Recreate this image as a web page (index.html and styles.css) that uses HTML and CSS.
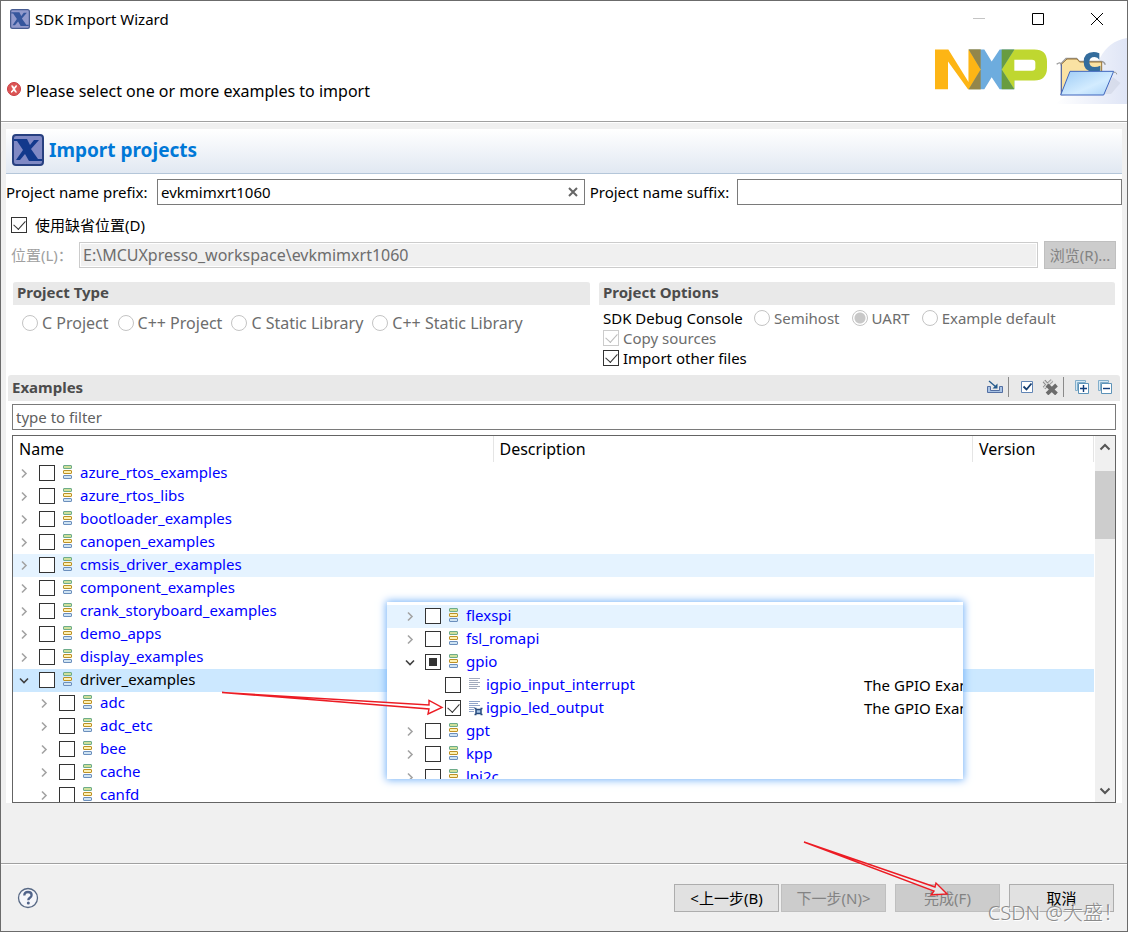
FILE: index.html
```html
<!DOCTYPE html>
<html lang="zh-CN">
<head>
<meta charset="utf-8">
<title>SDK Import Wizard</title>
<link rel="stylesheet" href="styles.css">
</head>
<body>
<svg class="defs" aria-hidden="true">
  <defs>
    <linearGradient id="folder-front" x1="0" y1="0" x2="1" y2="1"><stop offset="0" stop-color="#9ccbf5"/><stop offset=".6" stop-color="#d3ecff"/><stop offset="1" stop-color="#a9d2f8"/></linearGradient>
    <linearGradient id="banner-glow" x1="0" y1="0" x2="1" y2="0"><stop offset="0" stop-color="#fff"/><stop offset="1" stop-color="#dfe5f6"/></linearGradient>
    <symbol id="x-app" viewBox="0 0 32 32">
      <rect x="1" y="1" width="30" height="30" rx="3" fill="#8089c4" stroke="#274080" stroke-width="2"/>
      <path d="M2 5h13l3 6 4-5h5L19 15l7 10h4v2H17l-4-7-5 6H4l7-10-6-9H2z" fill="#12398c"/>
    </symbol>
    <symbol id="closed" viewBox="0 0 16 16"><path d="M6 4.500 10 8.500 6 12.500" fill="none" stroke="#a3a3a3" stroke-width="1.600"/></symbol>
    <symbol id="open" viewBox="0 0 16 16"><path d="M4 6.500 8 10.500 12 6.500" fill="none" stroke="#404040" stroke-width="1.600"/></symbol>
    <symbol id="group" viewBox="0 0 25 16">
      <rect x="8.500" y=".5" width="8" height="3" rx=".5" fill="#cfe09a" stroke="#6dac8b"/>
      <rect x="8.500" y="5.500" width="8" height="3" rx=".5" fill="#fdf1b4" stroke="#bd9125"/>
      <rect x="8.500" y="10.500" width="8" height="3" rx=".5" fill="#cfe3f2" stroke="#6b8fbd"/>
    </symbol>
    <symbol id="lines" viewBox="0 0 25 16"><path d="M8 1.500h11M8 3.500h9M8 5.500h11M8 7.500h9M8 9.500h11M8 11.500h8" stroke="#a2abbd" stroke-width="1"/></symbol>
    <symbol id="lines-chip" viewBox="0 0 25 16"><path d="M8 1.500h11M8 3.500h9M8 5.500h11M8 7.500h6M8 9.500h5M8 11.500h5" stroke="#8fa3c8"/><path d="M15 9.500h5v4h-5z" fill="#a9c6e6" stroke="#274a7d" stroke-width="1.500"/><path d="M13.500 8.500h2M19.500 8.500h2M13.500 14.500h2M19.500 14.500h2" stroke="#274a7d" stroke-width="1.500"/></symbol>
  </defs>
</svg>
<main class="window">
  <header class="titlebar">
    <svg class="app-icon" viewBox="0 0 32 32"><use href="#x-app"/></svg>
    <h1 class="window-title">SDK Import Wizard</h1>
    <button class="caption" aria-label="Minimize"><svg viewBox="0 0 14 14"><path d="M1 6.500h12" stroke="#c4c4c4"/></svg></button>
    <button class="caption" aria-label="Maximize"><svg viewBox="0 0 14 14"><path d="M1.500 1.500h11v11h-11z" fill="none" stroke="#000"/></svg></button>
    <button class="caption" aria-label="Close"><svg viewBox="0 0 14 14"><path d="M1 1l12 12M13 1 1 13" stroke="#000"/></svg></button>
  </header>

  <div class="banner">
    <p class="message">
      <svg class="error-icon" viewBox="0 0 14 14"><circle cx="7" cy="7" r="6.500" fill="#dc5655" stroke="#c83b42"/><path d="M4.500 4c2 0 3 6 5 6M9.800 4C8 4 6 10 4 10" fill="none" stroke="#fff" stroke-width="1.800"/></svg>
      Please select one or more examples to import
    </p>
    <svg class="nxp" viewBox="18 35 336 122" role="img" aria-label="NXP">
      <path d="M18 36h40l61 98V36h36v119h-38L57 72v83H18z" fill="#fdb515"/>
      <path d="M119 36h47l22 36 24-36h44v119h-44l-24-36-22 36h-47l36-59z" fill="#6dacde"/>
      <path d="M119 36l36 60-36 59z" fill="#fdb515"/>
      <path d="M119 36h36v60zM155 96v59h-36z" fill="#93864b"/>
      <path d="M218 96l38-60h60q38 0 38 37v17q0 39-38 39h-60v26z" fill="#bfd730"/>
      <path d="M218 36h38l-38 60zM218 96l38 59h-38z" fill="#689c40"/>
      <path d="M256 67h53q10 0 10 9v14q0 10-10 10h-53z" fill="#fff"/>
    </svg>
    <svg class="folder" viewBox="375 0 216 198" aria-hidden="true">
      <path d="M375 198Q480 130 510 60 535 10 591 0v198z" fill="url(#banner-glow)"/>
      <path d="M515 168l34-50 22 17-28 33z" fill="#c9cfe0" opacity=".5"/>
      <path d="M380 79q12-10 14 3v-6l14-15h32l8 9h66q8 0 12 10" fill="none" stroke="#9a9a9a" stroke-width="4"/>
      <path d="M394 170V79l17-16h30l8 9h66v95z" fill="#fae2a3" stroke="#977336" stroke-width="3"/>
      <path d="M394 79v90" stroke="#4a67b5" stroke-width="3"/>
      <path d="M508 46v19q-5-8-14-8-16 0-16 15t16 15q9 0 17-4v15q-9 3-21 3-29 0-29-29 0-30 30-30 7 0 17 4z" fill="#346d9d"/>
      <path d="M420 100h131l-30 71H392z" fill="url(#folder-front)" stroke="#3e65bd" stroke-width="3"/>
      <path d="M551 103h5q4 1 4 6" fill="none" stroke="#999" stroke-width="3"/>
    </svg>
  </div>

  <div class="body">
    <div class="panel">
      <div class="panel-heading">
        <svg class="panel-icon" viewBox="0 0 32 32"><use href="#x-app"/></svg>
        <h2 class="panel-title">Import projects</h2>
      </div>

      <div class="names">
        <label class="prefix-label" for="prefix">Project name prefix:</label>
        <div class="field prefix-field">
          <input id="prefix" class="text" type="text" value="evkmimxrt1060">
          <button class="clear" aria-label="Clear"><svg viewBox="0 0 12 12"><path d="M2 2l8 8M10 2l-8 8" stroke="#666" stroke-width="2"/></svg></button>
        </div>
        <label class="suffix-label" for="suffix">Project name suffix:</label>
        <input id="suffix" class="text boxed suffix" type="text">
      </div>

      <label class="option default-location"><input class="box" type="checkbox" checked><span>使用缺省位置(D)</span></label>

      <div class="location">
        <label class="location-label" for="location">位置(L)：</label>
        <input id="location" class="text boxed path" type="text" value="E:\MCUXpresso_workspace\evkmimxrt1060" disabled>
        <button class="button browse" disabled>浏览(R)...</button>
      </div>

      <div class="sections">
        <section>
          <h3 class="section-title">Project Type</h3>
          <div class="types">
            <label class="option muted"><input class="dot" type="radio" name="type" disabled><span>C Project</span></label>
            <label class="option muted"><input class="dot" type="radio" name="type" disabled><span>C++ Project</span></label>
            <label class="option muted"><input class="dot" type="radio" name="type" disabled><span>C Static Library</span></label>
            <label class="option muted"><input class="dot" type="radio" name="type" disabled><span>C++ Static Library</span></label>
          </div>
        </section>
        <section>
          <h3 class="section-title">Project Options</h3>
          <div class="options">
            <div class="console">
              <span class="console-label">SDK Debug Console</span>
              <label class="option muted"><input class="dot" type="radio" name="console" disabled><span>Semihost</span></label>
              <label class="option muted"><input class="dot" type="radio" name="console" checked disabled><span>UART</span></label>
              <label class="option muted"><input class="dot" type="radio" name="console" disabled><span>Example default</span></label>
            </div>
            <label class="option muted"><input class="box" type="checkbox" checked disabled><span>Copy sources</span></label>
            <label class="option"><input class="box" type="checkbox" checked><span>Import other files</span></label>
          </div>
        </section>
      </div>

      <div class="examples-bar">
        <h3 class="examples-title">Examples</h3>
        <button class="tool" aria-label="Import"><svg viewBox="0 0 16 16"><path d="M.5 7.500h3v4h9v-4h3v6H.5z" fill="#a9c3e4" stroke="#536fa3"/><path d="M2 2l7 6" stroke="#245a8c" stroke-width="1.300"/><path d="M10.500 4.500v5h-5z" fill="#245a8c"/></svg></button>
        <button class="tool ruled" aria-label="Select all"><svg viewBox="0 0 16 16"><path d="M2.500 2.500h11v11h-11z" fill="#fff" stroke="#6185b5"/><path d="M4.500 7.500l3 3 5-6" fill="none" stroke="#173f70" stroke-width="1.800"/></svg></button>
        <button class="tool" aria-label="Deselect all"><svg viewBox="0 0 16 16"><path d="M2 2l7 8M10 1.500 2 9" stroke="#8b8b8b" stroke-width="3.600"/><path d="M2 2l7 8M10 1.500 2 9" stroke="#dedede" stroke-width="1.800"/><path d="M5 6l9.500 9M14.500 6 5 15" stroke="#6c6c6c" stroke-width="3.800"/></svg></button>
        <button class="tool ruled" aria-label="Expand all"><svg viewBox="0 0 16 16"><path d="M1.500 11.500v-10h10v2h-8v8z" fill="#d5e8f3" stroke="#82aecb"/><path d="M4.500 4.500h10v10h-10z" fill="#fff" stroke="#5c93b8"/><path d="M6 9.500h7M9.500 6v7" stroke="#123f7c" stroke-width="1.400"/></svg></button>
        <button class="tool" aria-label="Collapse all"><svg viewBox="0 0 16 16"><path d="M1.500 11.500v-10h10v2h-8v8z" fill="#d5e8f3" stroke="#82aecb"/><path d="M4.500 4.500h10v10h-10z" fill="#fff" stroke="#5c93b8"/><path d="M6 9.500h7" stroke="#123f7c" stroke-width="1.400"/></svg></button>
      </div>

      <input class="text boxed filter" type="text" placeholder="type to filter" aria-label="Filter examples">

      <div class="tree">
        <div class="tree-view">
          <table class="grid">
            <colgroup><col class="col-name"><col class="col-description"><col class="col-version"></colgroup>
            <thead><tr><th>Name</th><th>Description</th><th>Version</th></tr></thead>
            <tbody>
              <tr><td><div class="node"><svg class="twist"><use href="#closed"/></svg><label><input class="box" type="checkbox"><svg class="kind"><use href="#group"/></svg><span>azure_rtos_examples</span></label></div></td><td></td><td></td></tr>
              <tr><td><div class="node"><svg class="twist"><use href="#closed"/></svg><label><input class="box" type="checkbox"><svg class="kind"><use href="#group"/></svg><span>azure_rtos_libs</span></label></div></td><td></td><td></td></tr>
              <tr><td><div class="node"><svg class="twist"><use href="#closed"/></svg><label><input class="box" type="checkbox"><svg class="kind"><use href="#group"/></svg><span>bootloader_examples</span></label></div></td><td></td><td></td></tr>
              <tr><td><div class="node"><svg class="twist"><use href="#closed"/></svg><label><input class="box" type="checkbox"><svg class="kind"><use href="#group"/></svg><span>canopen_examples</span></label></div></td><td></td><td></td></tr>
              <tr class="hover"><td><div class="node"><svg class="twist"><use href="#closed"/></svg><label><input class="box" type="checkbox"><svg class="kind"><use href="#group"/></svg><span>cmsis_driver_examples</span></label></div></td><td></td><td></td></tr>
              <tr><td><div class="node"><svg class="twist"><use href="#closed"/></svg><label><input class="box" type="checkbox"><svg class="kind"><use href="#group"/></svg><span>component_examples</span></label></div></td><td></td><td></td></tr>
              <tr><td><div class="node"><svg class="twist"><use href="#closed"/></svg><label><input class="box" type="checkbox"><svg class="kind"><use href="#group"/></svg><span>crank_storyboard_examples</span></label></div></td><td></td><td></td></tr>
              <tr><td><div class="node"><svg class="twist"><use href="#closed"/></svg><label><input class="box" type="checkbox"><svg class="kind"><use href="#group"/></svg><span>demo_apps</span></label></div></td><td></td><td></td></tr>
              <tr><td><div class="node"><svg class="twist"><use href="#closed"/></svg><label><input class="box" type="checkbox"><svg class="kind"><use href="#group"/></svg><span>display_examples</span></label></div></td><td></td><td></td></tr>
              <tr class="selected"><td><div class="node"><svg class="twist"><use href="#open"/></svg><label><input class="box" type="checkbox"><svg class="kind"><use href="#group"/></svg><span>driver_examples</span></label></div></td><td></td><td></td></tr>
              <tr><td><div class="node child"><svg class="twist"><use href="#closed"/></svg><label><input class="box" type="checkbox"><svg class="kind"><use href="#group"/></svg><span>adc</span></label></div></td><td></td><td></td></tr>
              <tr><td><div class="node child"><svg class="twist"><use href="#closed"/></svg><label><input class="box" type="checkbox"><svg class="kind"><use href="#group"/></svg><span>adc_etc</span></label></div></td><td></td><td></td></tr>
              <tr><td><div class="node child"><svg class="twist"><use href="#closed"/></svg><label><input class="box" type="checkbox"><svg class="kind"><use href="#group"/></svg><span>bee</span></label></div></td><td></td><td></td></tr>
              <tr><td><div class="node child"><svg class="twist"><use href="#closed"/></svg><label><input class="box" type="checkbox"><svg class="kind"><use href="#group"/></svg><span>cache</span></label></div></td><td></td><td></td></tr>
              <tr><td><div class="node child"><svg class="twist"><use href="#closed"/></svg><label><input class="box" type="checkbox"><svg class="kind"><use href="#group"/></svg><span>canfd</span></label></div></td><td></td><td></td></tr>
            </tbody>
          </table>
        </div>
        <div class="scrollbar">
          <button class="scroll-button" aria-label="Scroll up"><svg viewBox="0 0 12 8"><path d="M1.500 6.500 6 2l4.500 4.500" fill="none" stroke="#555" stroke-width="2"/></svg></button>
          <div class="track"><div class="thumb"></div></div>
          <button class="scroll-button" aria-label="Scroll down"><svg viewBox="0 0 12 8"><path d="M1.500 1.500 6 6l4.500-4.500" fill="none" stroke="#555" stroke-width="2"/></svg></button>
        </div>

        <div class="inset">
          <table class="grid">
            <colgroup><col class="inset-name"><col></colgroup>
            <tbody>
              <tr class="hover"><td><div class="node"><svg class="twist"><use href="#closed"/></svg><label><input class="box" type="checkbox"><svg class="kind"><use href="#group"/></svg><span>flexspi</span></label></div></td><td></td></tr>
              <tr><td><div class="node"><svg class="twist"><use href="#closed"/></svg><label><input class="box" type="checkbox"><svg class="kind"><use href="#group"/></svg><span>fsl_romapi</span></label></div></td><td></td></tr>
              <tr><td><div class="node"><svg class="twist"><use href="#open"/></svg><label><input class="box partial" type="checkbox"><svg class="kind"><use href="#group"/></svg><span>gpio</span></label></div></td><td></td></tr>
              <tr><td><div class="node child"><svg class="twist"></svg><label><input class="box" type="checkbox"><svg class="kind"><use href="#lines"/></svg><span>igpio_input_interrupt</span></label></div></td><td>The GPIO Example</td></tr>
              <tr><td><div class="node child"><svg class="twist"></svg><label><input class="box" type="checkbox" checked><svg class="kind"><use href="#lines-chip"/></svg><span>igpio_led_output</span></label></div></td><td>The GPIO Example</td></tr>
              <tr><td><div class="node"><svg class="twist"><use href="#closed"/></svg><label><input class="box" type="checkbox"><svg class="kind"><use href="#group"/></svg><span>gpt</span></label></div></td><td></td></tr>
              <tr><td><div class="node"><svg class="twist"><use href="#closed"/></svg><label><input class="box" type="checkbox"><svg class="kind"><use href="#group"/></svg><span>kpp</span></label></div></td><td></td></tr>
              <tr><td><div class="node"><svg class="twist"><use href="#closed"/></svg><label><input class="box" type="checkbox"><svg class="kind"><use href="#group"/></svg><span>lpi2c</span></label></div></td><td></td></tr>
            </tbody>
          </table>
        </div>
        <svg class="arrow arrow-example" viewBox="220 688 226 30" aria-hidden="true"><path d="M222 692.500l207 12.500v-4.500l13 7-14 6.500 1-5z" fill="#fff" fill-opacity=".8" stroke="#ec1c24" stroke-width="1.400"/></svg>
      </div>
    </div>
  </div>

  <footer class="footer">
    <button class="help" aria-label="Help"><svg viewBox="0 0 22 22"><circle cx="11" cy="11" r="9.500" fill="#f5f6fa" stroke="#586985" stroke-width="1.300"/><path d="M7.300 8.600q0-3.600 3.700-3.600 3.600 0 3.600 3 0 1.600-1.700 2.800-1.600 1.100-1.600 2.400" fill="none" stroke="#51648a" stroke-width="2.300"/><circle cx="11.300" cy="16" r="1.500" fill="#51648a"/></svg></button>
    <div class="pair">
      <button class="button">&lt;上一步(B)</button>
      <button class="button" disabled>下一步(N)&gt;</button>
    </div>
    <div class="finish">
      <button class="button" disabled>完成(F)</button>
      <svg class="arrow arrow-finish" viewBox="802 838 148 60" aria-hidden="true"><path d="M804 842l131 45 1-4 11 11-16 1 3-4z" fill="#f0f0f0" fill-opacity=".7" stroke="#ec1c24" stroke-width="1.400"/></svg>
    </div>
    <button class="button">取消</button>
    <span class="watermark">CSDN @大盛！</span>
  </footer>
</main>
</body>
</html>
```
FILE: styles.css
```css
* { box-sizing: border-box; }

body {
  margin: 0;
  background: #fff;
  color: #000;
  font: 15px/20px "Noto Sans", "Noto Sans CJK SC", sans-serif;
}

h1, h2, h3, p { margin: 0; font-size: 15px; }
button, input { font: inherit; color: inherit; margin: 0; }
button { padding: 0; border: 0; background: none; }
svg { display: block; flex: none; }
.defs { position: absolute; width: 0; height: 0; }

.window {
  display: flex;
  flex-direction: column;
  height: 100vh;
  border: 1px solid #6b6b6b;
  background: #f0f0f0;
  overflow: hidden;
}

/* Title bar and banner */
.titlebar { display: flex; align-items: center; height: 37px; padding: 0 1px 2px 9px; background: #fff; }
.app-icon { width: 20px; height: 20px; margin-right: 5px; opacity: .85; }
.window-title { flex: 1; font-weight: 400; }
.caption { display: grid; place-items: center; width: 59px; height: 35px; }
.caption svg { width: 14px; height: 14px; }

.banner { display: flex; align-items: flex-start; height: 84px; background: #fff; border-bottom: 1px solid #a0a0a0; flex: none; }
.message { display: flex; align-items: center; gap: 5px; flex: 1; padding: 43px 0 0 6px; }
.error-icon { width: 14px; height: 14px; margin-bottom: 4px; }
.nxp { width: 112px; height: 41px; margin: 11px 8px 0 0; }
.folder { width: 72px; height: 66px; }

.body { display: flex; flex: 1; min-height: 0; padding: 6px 5px 60px; border-top: 1px solid #fff; }
.panel { display: flex; flex-direction: column; flex: 1; min-width: 0; background: #fff; }

.panel-heading {
  display: flex;
  align-items: center;
  gap: 5px;
  height: 45px;
  padding: 0 0 3px 6px;
  background: linear-gradient(#fff, #e1e8f2);
  border-bottom: 1px solid #b4c6d9;
  flex: none;
}
.panel-icon { width: 32px; height: 32px; }
.panel-title { font-size: 19px; color: #0078d7; }

/* Form rows */
.names { display: flex; align-items: center; gap: 5px; margin-top: 5px; }
.prefix-label { width: 146px; white-space: nowrap; }
.suffix-label { width: 142px; white-space: nowrap; }
.text { height: 26px; padding: 0 3px; border: 0; border-radius: 0; background: #fff; outline: 0; min-width: 0; }
.boxed, .field { border: 1px solid #7a7a7a; }
.field { display: flex; align-items: center; height: 26px; background: #fff; }
.field .text { flex: 1; height: 24px; }
.prefix-field { flex: 431 1 0; }
.suffix { flex: 382 1 0; }
.clear { display: grid; place-items: center; width: 22px; height: 24px; }
.clear svg { width: 12px; height: 12px; }

.option { display: flex; align-items: center; gap: 4px; }
.muted { color: #6d6d6d; }
.default-location { gap: 8px; margin: 10px 0 0 5px; }

.box, .dot {
  appearance: none;
  width: 16px;
  height: 16px;
  flex: none;
  border: 1px solid #333;
  background: #fff;
}
.box { position: relative; }
.box:checked::after {
  content: "";
  position: absolute;
  left: 4px;
  top: 0;
  width: 6px;
  height: 10px;
  border: solid #333;
  border-width: 0 1px 1px 0;
  transform: rotate(42deg);
}
.box.partial { background: linear-gradient(#333, #333) center / 8px 8px no-repeat #fff; }
.box:disabled { border-color: #ccc; }
.box:disabled::after { border-color: #bbb; }
.dot { border-color: #c4c4c4; border-radius: 50%; }
.dot:checked { background: radial-gradient(circle, #c8c8c8 5px, #fff 6px); }

.location { display: flex; align-items: center; margin: 6px 6px 0 5px; }
.location-label { width: 68px; color: #a0a0a0; }
.path { flex: 1; margin-right: 6px; background: #f0f0f0; border-color: #ccc; box-shadow: inset 0 0 0 1px #fff; color: #6d6d6d; }
.button { width: 105px; height: 28px; border: 1px solid #adadad; background: #e1e1e1; white-space: nowrap; }
.button:disabled { border-color: #bfbfbf; background: #ccc; color: #838383; }
.browse { width: 72px; }

.message, .path, .types, .grid th { font-size: 16px; }

.sections { display: grid; grid-template-columns: 577fr 516fr; gap: 9px; margin: 12px 7px 0; }
.section-title, .examples-title { color: #4c4c4c; }
.section-title { height: 24px; padding: 0 4px; border-top: 1px solid #fff; background: #e9e9e9; border-radius: 3px 3px 0 0; }
.types { display: flex; gap: 9px; padding: 8px 0 0 9px; white-space: nowrap; }
.options { padding: 3px 0 0 4px; }
.console { display: flex; gap: 5px; white-space: nowrap; }
.console-label { width: 146px; }
.console .option + .option { margin-left: 7px; }

/* Examples */
.examples-bar { display: flex; align-items: center; height: 26px; margin: 7px 2px 0; padding: 0 3px 2px 4px; background: #e9e9e9; border-radius: 3px 3px 0 0; flex: none; }
.examples-title { flex: 1; padding-bottom: 1px; }
.tool { display: grid; place-items: center; width: 24px; height: 20px; }
.tool svg { width: 16px; height: 16px; }
.ruled { width: 30px; padding-left: 6px; border-left: 1px solid #8a8a8a; margin-left: 1px; }
.filter { margin: 3px 6px 0; }
.filter::placeholder { color: #5f5f5f; opacity: 1; }

.tree { position: relative; display: flex; flex: 1; min-height: 0; margin: 5px 6px 0; border: 1px solid #646464; }
.tree-view { flex: 1; min-width: 0; padding-right: 1px; overflow: hidden; }
.grid { width: 100%; border-collapse: collapse; table-layout: fixed; }
.col-name { width: 480px; }
.col-version { width: 121px; }
.grid th { height: 26px; padding: 0 6px; border-right: 1px solid #e5e5e5; font-weight: 400; text-align: left; }
.grid td { height: 23px; padding: 0 0 1px; white-space: nowrap; }
.hover { background: #e5f3ff; }
.selected { background: #cce8ff; }
.node { display: flex; align-items: center; gap: 7px; padding-left: 3px; color: #00f; }
.child { padding-left: 23px; }
.selected .node { color: #000; }
.node label { display: flex; align-items: center; }
.node span { padding-bottom: 2px; }
.twist { width: 16px; height: 16px; }
.kind { width: 25px; height: 16px; }

.scrollbar { display: flex; flex-direction: column; width: 20px; background: #f0f0f0; }
.scroll-button { display: grid; place-items: center; height: 22px; }
.scroll-button svg { width: 12px; height: 8px; }
.track { flex: 1; padding-top: 13px; }
.thumb { height: 68px; background: #cdcdcd; }

/* Detail pane laid over the tree */
.inset {
  position: absolute;
  left: 374px;
  top: 166px;
  width: 576px;
  height: 177px;
  padding-top: 3px;
  overflow: hidden;
  background: #fff;
  box-shadow: 0 0 8px 1px #75b2f8;
}
.inset-name { width: 477px; }
.inset .node { padding-left: 15px; }
.inset .child { padding-left: 35px; }

.arrow { position: absolute; pointer-events: none; }
.arrow-example { left: 207px; top: 252px; width: 226px; height: 30px; }
.arrow-finish { right: 50px; bottom: 14px; width: 148px; height: 60px; }

/* Footer */
.footer { position: relative; display: flex; align-items: center; height: 68px; padding: 0 13px 0 16px; border-top: 1px solid #a0a0a0; box-shadow: inset 0 1px #fff; flex: none; }
.help { width: 22px; height: 22px; margin-right: auto; }
.pair { display: flex; gap: 2px; }
.finish { position: relative; margin: 0 9px; }
.watermark { position: absolute; right: 4px; bottom: 8px; color: #8b8b8b; font-size: 20px; font-weight: 300; text-shadow: 1px 1px #fff; }
```
